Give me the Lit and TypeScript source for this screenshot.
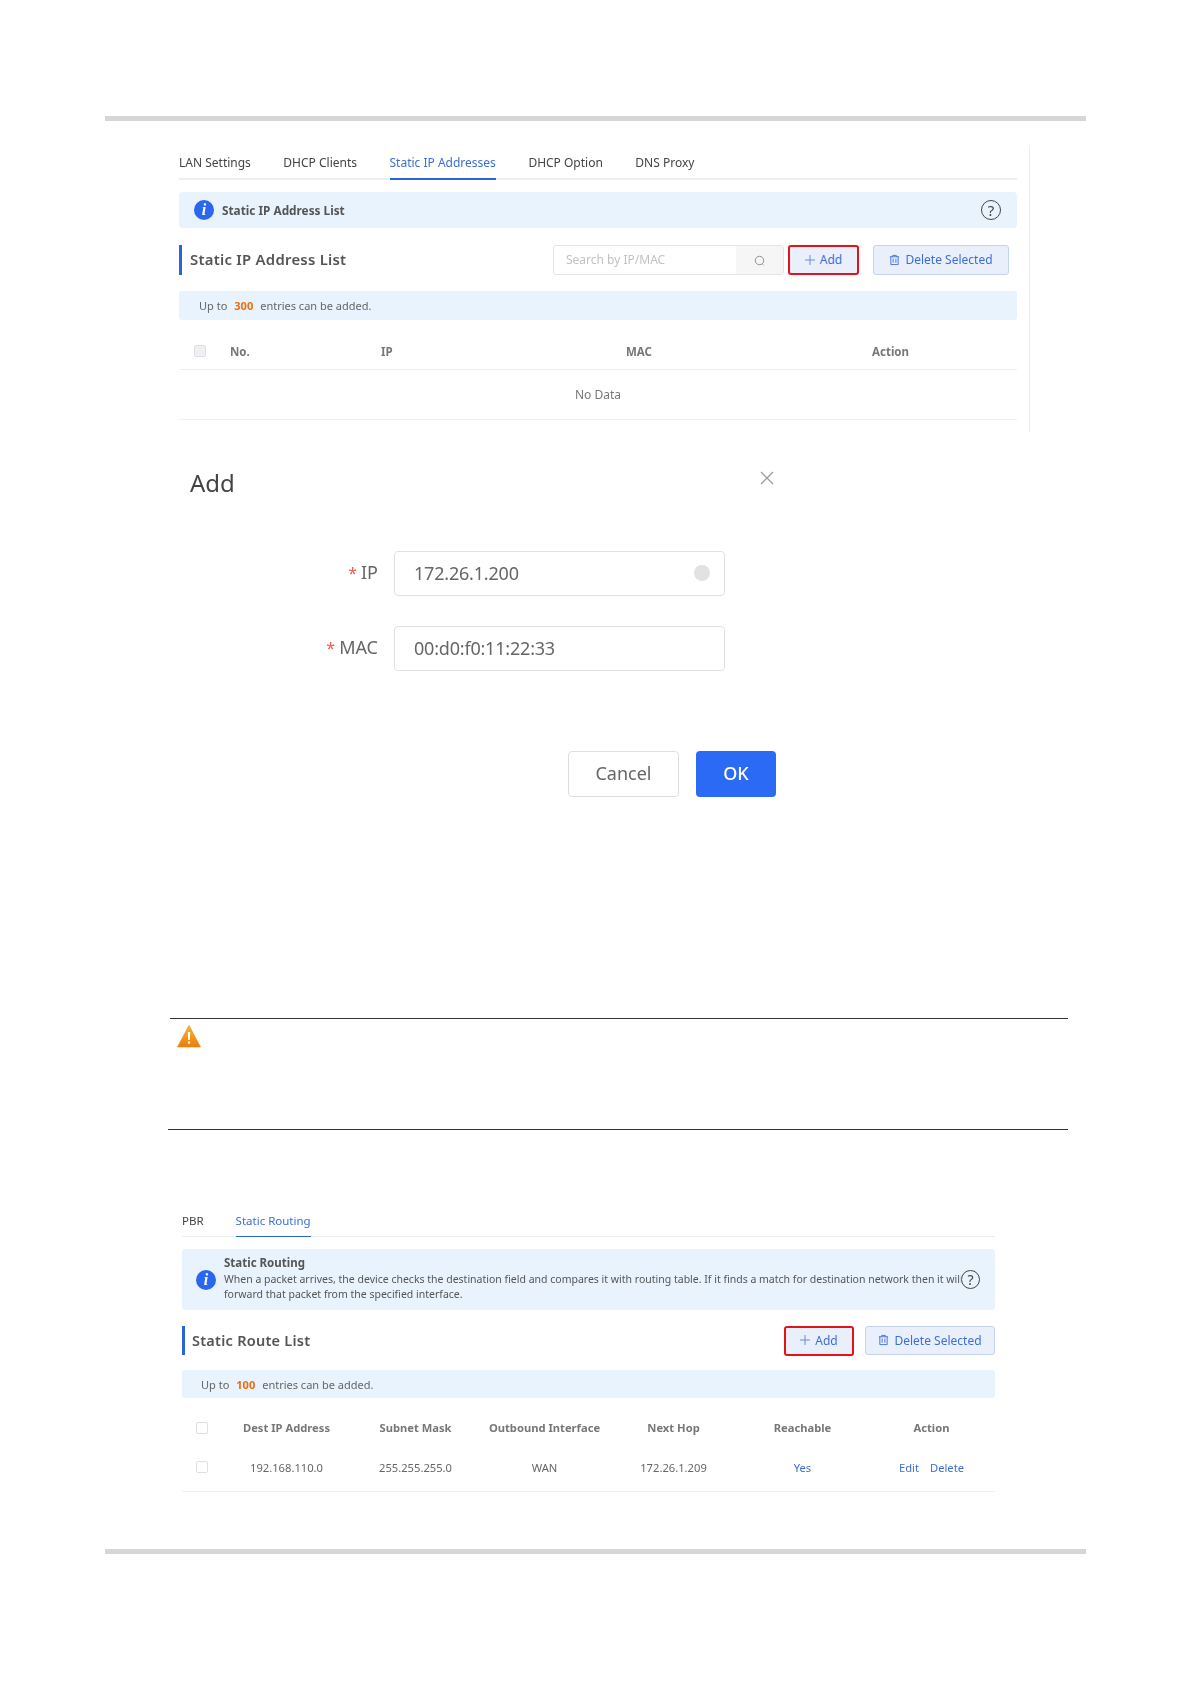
import { LitElement, html, css } from "lit";
import { customElement } from "lit/decorators.js";

const trash = html`<svg class="ic" viewBox="0 0 12 12" width="11" height="12" fill="none" stroke="currentColor" stroke-width="1"><path d="M1 2.5h10M4 2.5V1h4v1.5M2 2.5V11h8V2.5M4.5 4.5v4.5M7.5 4.5v4.5"/></svg>`;
const plus = html`<svg class="ic plus" viewBox="0 0 10 10" width="10" height="10" fill="none" stroke="currentColor" stroke-width="1"><path d="M5 0v10M0 5h10"/></svg>`;
const info = html`<span class="info-ic">i</span>`;
const help = html`<span class="help-ic">?</span>`;

@customElement("app-root")
export class AppRoot extends LitElement {
  static styles = css`
    :host { display: block; width: 1191px; height: 1684px; background: #fff; overflow: hidden; font-family: "Noto Sans", "Liberation Sans", sans-serif; color: #555; }
    .page { display: flex; flex-direction: column; padding-top: 116px; }
    .bar { width: 981px; height: 5px; margin-left: 105px; background: #d6d6d6; flex: none; }
    .panel { filter: blur(0.35px); }
    .sec1 { width: 838px; height: 287px; margin: 24px 0 0 179px; padding-right: 12px; border-right: 1px solid #eeeeee; }
    .sec3 { width: 813px; margin: 81px 0 0 182px; }
    .tabs { display: flex; border-bottom: 2px solid #eceff2; height: 35px; box-sizing: border-box; font-size: 12px; color: #444; }
    .tab { padding-top: 8px; margin-right: 32.5px; line-height: 20px; }
    .tab.on { color: #3b6fd8; height: 35px; box-sizing: border-box; border-bottom: 2px solid #2b63d9; }
    .sec3 .tabs { height: 26px; margin-top: 0; font-size: 11.5px; border-bottom-width: 1px; }
    .sec3 .tab { padding-top: 0; margin-right: 32px; }
    .sec3 .tab.on { height: 26px; border-bottom-width: 1px; }
    .infobar { display: flex; align-items: center; background: #e8f3fe; border-radius: 4px; margin-top: 12px; height: 36px; padding: 0 15px; font-size: 11.8px; font-weight: 700; color: #555; }
    .info-ic { flex: none; width: 20px; height: 20px; border-radius: 50%; background: #2a66ee; color: #fff; font: italic 700 16px/20px "Liberation Serif", serif; text-align: center; margin-right: 8px; }
    .help-ic { flex: none; width: 18px; height: 18px; border: 1.5px solid #444; border-radius: 50%; color: #444; font: 400 15px/18px "Noto Sans", sans-serif; text-align: center; margin-left: auto; margin-right: 1px; }
    .sec3 .infobar { height: 61px; margin-top: 12px; padding: 0 15px 0 14px; }
    .sec3 .info-ic { margin-right: 8px; }
    .sec3 .help-ic { margin-right: 0; margin-left: 0; width: 17px; height: 17px; font-size: 14px; line-height: 17px; }
    .infotext { flex: none; width: 737px; font-weight: 400; font-size: 10.5px; line-height: 15px; color: #555; white-space: nowrap; overflow: hidden; padding-bottom: 3px; }
    .infotext b { display: block; font-size: 11.5px; line-height: 18px; font-weight: 700; }
    .head { display: flex; align-items: center; height: 30px; margin-top: 17px; }
    .sec3 .head { margin-top: 16px; height: 29px; }
    .title { border-left: 3px solid #2b63d9; height: 100%; padding-left: 8px; line-height: 28px; font-size: 14.9px; font-weight: 600; color: #555; margin-right: auto; letter-spacing: 0.25px; box-sizing: border-box; }
    .sec3 .title { font-size: 14.5px; padding-left: 7px; }
    .search { display: flex; width: 231px; height: 30px; box-sizing: border-box; border: 1px solid #e2e4e8; border-radius: 3px; font-size: 12px; color: #c2c2c2; }
    .search span { flex: 1; line-height: 27px; padding-left: 12px; }
    .search i { flex: none; width: 47px; background: #f6f6f6; display: flex; align-items: center; justify-content: center; color: #888; }
    .btn { display: flex; align-items: center; justify-content: center; gap: 5px; height: 30px; box-sizing: border-box; background: #eaeffc; color: #3b6fd8; font-size: 12px; border-radius: 3px; border: 1px solid #c5d3f2; padding-bottom: 1px; }
    .plus { opacity: .75; }
    .add { width: 71px; border: 2px solid #e0141b; margin-left: 4px; }
    .sec3 .add { width: 70px; margin-left: 0; }
    .del { width: 136px; margin-left: 14px; margin-right: 8px; }
    .sec3 .del { width: 130px; margin: 0 0 0 11px; height: 29px; }
    .notice { background: #e8f3fe; border-radius: 3px; height: 29px; margin-top: 16px; padding-left: 20px; display: flex; align-items: center; font-size: 11px; color: #666; }
    .sec3 .notice { height: 28px; margin-top: 15px; padding-left: 19px; }
    .notice b { color: #ef6c0a; margin: 0 7px; font-weight: 700; }
    .thead, .trow { display: grid; align-items: center; font-size: 11.2px; }
    .thead { font-weight: 700; color: #777; }
    .t1 .thead { grid-template-columns: 51px 151px 245px 246px 1fr; height: 36px; margin-top: 13px; border-bottom: 1px solid #eef0f2; font-size: 11.5px; }
    .nodata { height: 49px; line-height: 50px; text-align: center; font-size: 12px; color: #777; border-bottom: 1px solid #eef0f2; padding-left: 0; }
    .cb { width: 12px; height: 12px; box-sizing: border-box; border: 1px solid #dcdfe4; border-radius: 2px; margin-left: 14px; }
    .t1 .cb { margin-left: 15px; }
    .cb.gr { background: #eef0f2; }
    .t3 .thead, .t3 .trow { grid-template-columns: 40px repeat(6, 129px); text-align: center; }
    .t3 .thead { height: 35px; margin-top: 12px; }
    .t3 .trow { height: 44px; color: #666; border-bottom: 1px solid #eef0f2; padding-bottom: 5px; box-sizing: border-box; margin-top: 3px; }
    .lnk { color: #3b6fd8; }
    .lnk + .lnk { margin-left: 11px; }
    .dialog { width: 586px; margin-left: 190px; height: 365px; filter: blur(0.35px); }
    .dlg-head { display: flex; justify-content: space-between; padding-top: 35px; height: 32px; }
    .dlg-title { font-size: 24px; line-height: 32px; color: #444; }
    .x { margin: 4px 2px 0 0; color: #999; }
    .field { display: flex; align-items: center; margin-top: 30px; font-size: 18px; color: #666; }
    .field.first { margin-top: 52px; }
    .lab { width: 188px; text-align: right; margin-right: 16px; position: relative; top: -2px; }
    .lab em { color: #ee5a55; font-style: normal; margin-right: 4px; font-size: 16px; }
    .inp { width: 331px; height: 45px; box-sizing: border-box; border: 1.5px solid #dfe1e5; border-radius: 4px; padding: 0 14px 2px 19px; display: flex; align-items: center; justify-content: space-between; font-size: 18px; color: #666; letter-spacing: -0.2px; }
    .clr { width: 16px; height: 16px; border-radius: 50%; background: #e2e2e2; }
    .dlg-actions { display: flex; justify-content: flex-end; gap: 17px; margin-top: 80px; }
    .dbtn { height: 46px; box-sizing: border-box; border-radius: 4px; display: flex; align-items: center; justify-content: center; font-size: 18px; padding-bottom: 2px; }
    .cancel { width: 111px; border: 1.5px solid #dcdee2; color: #666; }
    .ok { width: 80px; background: #2a6af5; color: #fff; font-weight: 500; }
    .warn { margin: 221px 0 0 168px; width: 900px; height: 112px; box-sizing: border-box; flex: none; border-bottom: 1px solid #333; }
    .warn-top { margin: 0 0 0 2px; border-top: 1px solid #333; padding: 6px 0 0 7px; }
    .warn-top svg { display: block; }
    .wrapbar { margin-top: 57px; }
  `;

  render() {
    return html`<div class="page">
      <div class="bar"></div>
      <div class="panel sec1">
        <div class="tabs">
          <div class="tab">LAN Settings</div><div class="tab">DHCP Clients</div><div class="tab on">Static IP Addresses</div><div class="tab">DHCP Option</div><div class="tab">DNS Proxy</div>
        </div>
        <div class="infobar">${info}<span>Static IP Address List</span>${help}</div>
        <div class="head">
          <div class="title">Static IP Address List</div>
          <div class="search"><span>Search by IP/MAC</span><i><svg viewBox="0 0 12 12" width="11" height="11" fill="none" stroke="currentColor"><circle cx="6" cy="6" r="4.6"/><path d="M9 9.6l1.4 1.2"/></svg></i></div>
          <div class="btn add">${plus}<span>Add</span></div>
          <div class="btn del">${trash}<span>Delete Selected</span></div>
        </div>
        <div class="notice">Up to <b>300</b> entries can be added.</div>
        <div class="t1">
          <div class="thead"><div class="cb gr"></div><div>No.</div><div>IP</div><div>MAC</div><div>Action</div></div>
          <div class="nodata">No Data</div>
        </div>
      </div>
      <div class="dialog">
        <div class="dlg-head">
          <div class="dlg-title">Add</div>
          <svg class="x" viewBox="0 0 14 14" width="14" height="14" fill="none" stroke="currentColor" stroke-width="1.2"><path d="M1 1l12 12M13 1L1 13"/></svg>
        </div>
        <div class="field first"><div class="lab"><em>*</em>IP</div><div class="inp"><span>172.26.1.200</span><span class="clr"></span></div></div>
        <div class="field"><div class="lab"><em>*</em>MAC</div><div class="inp"><span>00:d0:f0:11:22:33</span></div></div>
        <div class="dlg-actions"><div class="dbtn cancel">Cancel</div><div class="dbtn ok">OK</div></div>
      </div>
      <div class="warn">
        <div class="warn-top">
          <svg viewBox="0 0 24 23" width="24" height="23">
            <defs><linearGradient id="w" x1="0" y1="0" x2="0" y2="1"><stop offset="0" stop-color="#fbb32c"/><stop offset="1" stop-color="#ee7c0c"/></linearGradient></defs>
            <path d="M12 0.5L23.5 22H0.5z" fill="url(#w)" stroke="#e08a1a" stroke-width="0.6"/>
            <path d="M10.8 7h2.4l-.4 8h-1.6z" fill="#fff"/><rect x="10.9" y="16.4" width="2.2" height="2.4" fill="#fff"/>
          </svg>
        </div>
      </div>
      <div class="panel sec3">
        <div class="tabs"><div class="tab">PBR</div><div class="tab on">Static Routing</div></div>
        <div class="infobar">${info}
          <div class="infotext"><b>Static Routing</b>When a packet arrives, the device checks the destination field and compares it with routing table. If it finds a match for destination network then it will<br>forward that packet from the specified interface.</div>
          ${help}
        </div>
        <div class="head">
          <div class="title">Static Route List</div>
          <div class="btn add">${plus}<span>Add</span></div>
          <div class="btn del">${trash}<span>Delete Selected</span></div>
        </div>
        <div class="notice">Up to <b>100</b> entries can be added.</div>
        <div class="t3">
          <div class="thead"><div class="cb"></div><div>Dest IP Address</div><div>Subnet Mask</div><div>Outbound Interface</div><div>Next Hop</div><div>Reachable</div><div>Action</div></div>
          <div class="trow"><div class="cb"></div><div>192.168.110.0</div><div>255.255.255.0</div><div>WAN</div><div>172.26.1.209</div><div class="lnk">Yes</div><div><span class="lnk">Edit</span><span class="lnk">Delete</span></div></div>
        </div>
      </div>
      <div class="bar wrapbar"></div>
    </div>`;
  }
}
